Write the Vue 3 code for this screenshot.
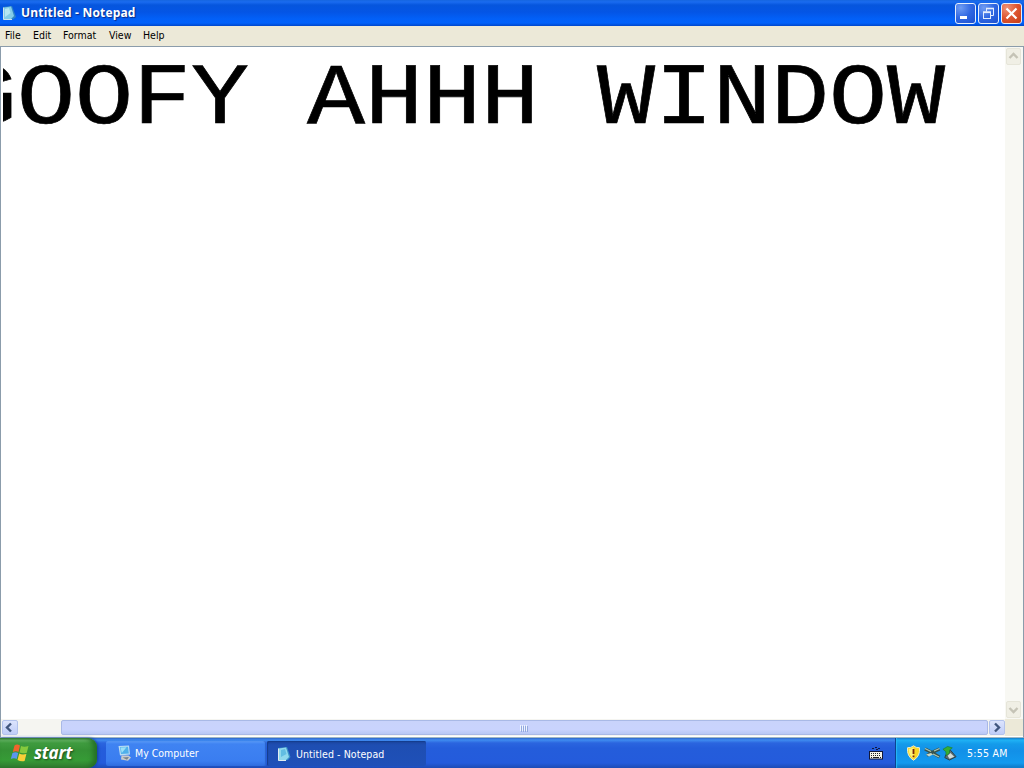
<template>
  <div class="screen">
    <header class="titlebar">
      <svg class="title-icon" viewBox="0 0 16 16">
        <path d="M2 2 L11 1 L15 12 L12 14.5 L2 15 Z" fill="#2f84c6" />
        <path d="M3 2.5 L10 1.5 L13 11 L10 14 L3 14 Z" fill="#84cde8" />
        <path d="M4 4 L8 3 L9.5 8 L4 12 Z" fill="#b5e6f2" />
        <path d="M2.5 2.5 V14.5 H11" fill="none" stroke="#cfe3ec" />
      </svg>
      <h1 class="title">Untitled - Notepad</h1>
      <div class="controls">
        <button class="ctl" aria-label="Minimize">
          <svg viewBox="0 0 21 21"><rect x="5" y="13" width="7" height="3" fill="#fff" /></svg>
        </button>
        <button class="ctl" aria-label="Restore">
          <svg viewBox="0 0 21 21" fill="none" stroke="#e4edfd">
            <path d="M8.5 8.5 V5.5 H15.5 V12.5 H13" />
            <path d="M8 5.5 H16" stroke-width="1.6" />
            <rect x="5.5" y="9" width="7" height="6.5" />
            <path d="M5 9.3 H13" stroke-width="1.6" />
          </svg>
        </button>
        <button class="ctl close" aria-label="Close">
          <svg viewBox="0 0 21 21"><path d="M5.5 5.5 L15.5 15.5 M15.5 5.5 L5.5 15.5" stroke="#fff" stroke-width="2.2" /></svg>
        </button>
      </div>
    </header>

    <nav class="menubar">
      <span v-for="m in menus" :key="m.label" :style="{ width: m.width + 'px' }">{{ m.label }}</span>
    </nav>

    <main class="client">
      <div class="upper">
        <div class="editor"><div class="text">GOOFY AHHH WINDOW</div></div>
        <div class="vscroll">
          <div class="vbtn"><svg viewBox="0 0 15 17"><path d="M3.5 10 L7.5 6 L11.5 10" /></svg></div>
          <div class="vbtn"><svg viewBox="0 0 15 17"><path d="M3.5 7 L7.5 11 L11.5 7" /></svg></div>
        </div>
      </div>
      <div class="lower">
        <div class="hscroll">
          <div class="hbtn"><svg viewBox="0 0 15 15"><path d="M9 3.5 L5 7.5 L9 11.5" /></svg></div>
          <div class="track"></div>
          <div class="thumb"><i v-for="n in 4" :key="n"></i></div>
          <div class="hbtn"><svg viewBox="0 0 15 15"><path d="M6 3.5 L10 7.5 L6 11.5" /></svg></div>
        </div>
        <div class="corner"></div>
      </div>
    </main>

    <footer class="taskbar">
      <button class="start">
        <svg class="flag" viewBox="0 0 20 20">
          <path d="M4.5 2.5 Q7 0.5 10 2.5 L8.5 9 Q6 7.5 2.8 9 Z" fill="#f0642c" />
          <path d="M11 3 Q14 4.5 18.5 3 L16.8 9.8 Q13 11 9.5 9.5 Z" fill="#85c93d" />
          <path d="M2.5 10 Q5.5 8.5 8.2 10 L6.7 16 Q4 14.5 0.8 16 Z" fill="#5b96ee" />
          <path d="M9.2 10.5 Q12 12 16.4 11 L14.6 18 Q11 19 7.5 17 Z" fill="#f9cf38" />
        </svg>
        <span>start</span>
      </button>
      <div class="tasks">
        <button class="task">
          <svg viewBox="0 0 16 16">
            <path d="M1.5 1 L12 0.5 L13 9.5 L3 10.5 Z" fill="#b9dcf3" />
            <path d="M3 2 L11 1.8 L11.8 8.4 L4 9 Z" fill="#4fb0ea" />
            <path d="M3.5 2.5 L9.5 2.3 L4.8 8 Z" fill="#9be0f7" />
            <path d="M4.5 10.5 H11.5 L14 12.5 L11 15.8 L4 14.5 Z" fill="#c9cccb" />
            <path d="M5.5 12.5 L12 12 L10 14.8 Z" fill="#77828e" />
          </svg>
          <span class="computer">My Computer</span>
        </button>
        <button class="task active">
          <svg viewBox="0 0 16 16">
            <path d="M2 2 L11 1 L14.5 11 L12 14 L2 15 Z" fill="#3a91c8" />
            <path d="M3 2.5 L10 1.5 L13 11 L10 14 L3 14 Z" fill="#90d8ed" />
            <path d="M5 4 L9 3 L10.5 8 L5 11 Z" fill="#62bde2" />
            <path d="M2.5 2.5 V14.5 H10" fill="none" stroke="#e2edf0" />
          </svg>
          <span class="notepad">Untitled - Notepad</span>
        </button>
      </div>
      <svg class="keyboard" viewBox="0 0 14 14">
        <path d="M3 2.5 H5 M6 1.5 H8 M9 2.5 H11 M7 3.5 H9" stroke="#101a40" />
        <rect x="0.5" y="5.5" width="13" height="7.5" fill="#f5f4ea" stroke="#11183a" />
        <path d="M2 7.5 H12 M2 9.5 H12" stroke="#222" stroke-dasharray="1 1" />
        <path d="M2 11.5 H3 M4 11.5 H10 M11 11.5 H12" stroke="#222" />
      </svg>
      <div class="tray">
        <svg class="shield" viewBox="0 0 14 16">
          <path d="M7 0.8 Q9.5 3 13 2.7 Q14 11 7 15.3 Q0 11 1 2.7 Q4.5 3 7 0.8 Z" fill="#f8d727" stroke="#e9e9cb" />
          <path d="M7 2.2 Q4.5 4 2.2 4 Q2 10 7 13.8 Z" fill="#fdf27c" />
          <path d="M7 4 V9 M7 10.5 V12.3" stroke="#7b2606" stroke-width="1.8" />
        </svg>
        <svg class="net" viewBox="0 0 17 14">
          <path d="M1 3 L8 6.5 L15.5 3 M3 9.5 L8 6.5 L15.5 11" fill="none" stroke="#38534e" stroke-width="3.2" />
          <path d="M1 2.5 L7 5.5 M10 5 L15.5 2.5 M9 8 L15 11" stroke="#a9c7b5" stroke-width="1.3" />
          <path d="M2 8.5 L7 7 L9 8.5 L5 10.5 Z" fill="#c5d7c7" />
        </svg>
        <svg class="eject" viewBox="0 0 16 16">
          <path d="M4 10 L9 5 L15 12 L8 15.5 L3 13 Z" fill="#5d6d71" stroke="#263f4c" />
          <path d="M6 11 L9 8 L13 12 L8 14 Z" fill="#d3dcda" />
          <path d="M1 4 L6 1 L11 2.5 L8 5 L8 8 L4.5 11 L4 6.5 Z" fill="#35ae35" stroke="#167a27" stroke-width="0.6" />
        </svg>
        <time>5:55 AM</time>
      </div>
    </footer>
  </div>
</template>

<script setup>
const menus = [
  { label: 'File', width: 28 },
  { label: 'Edit', width: 30 },
  { label: 'Format', width: 46 },
  { label: 'View', width: 34 },
  { label: 'Help', width: 30 },
];
</script>

<style>
body {
  margin: 0;
  overflow: hidden;
}
</style>

<style scoped>
.screen {
  width: 1024px;
  height: 768px;
  display: flex;
  flex-direction: column;
  overflow: hidden;
  background: #fff;
  font-family: "DejaVu Sans Condensed", "DejaVu Sans", sans-serif;
  font-stretch: condensed;
  font-size: 10.5px;
}

button {
  border: 0;
  margin: 0;
  padding: 0;
  font: inherit;
  color: inherit;
}

svg {
  display: block;
  flex: none;
}

.titlebar {
  height: 26px;
  flex: none;
  box-sizing: border-box;
  display: flex;
  align-items: center;
  padding: 0 2px 0 1px;
  background: linear-gradient(#1666e0 0, #1a6bf0 2px, #0656dd 5px, #0455e5 12px, #0260f8 19px, #0162fb 23px, #0047cb 26px);
}

.title-icon {
  width: 16px;
  height: 16px;
}

.title {
  margin: 0 0 0 4px;
  flex: 1;
  color: #fff;
  font-family: "Open Sans", sans-serif;
  font-stretch: normal;
  font-size: 12px;
  font-weight: 700;
  letter-spacing: 0.18px;
  line-height: 26px;
  white-space: nowrap;
  text-shadow: 1px 1px 1px #0a2a86;
}

.controls {
  display: flex;
  gap: 2px;
}

.ctl {
  width: 21px;
  height: 21px;
  box-sizing: border-box;
  border: 1px solid #e6effc;
  border-radius: 3px;
  background: radial-gradient(circle at 25% 20%, #6f9cf3, #3067e2 50%, #1c50cf);
}

.ctl svg {
  width: 21px;
  height: 21px;
  margin: -1px;
}

.ctl.close {
  background: radial-gradient(circle at 25% 20%, #ee9276, #dd5530 50%, #c63d14);
}

.menubar {
  height: 20px;
  flex: none;
  display: flex;
  padding-left: 5px;
  background: #ece9d8;
  line-height: 19px;
  color: #000;
  white-space: nowrap;
}

.client {
  flex: 1;
  min-height: 0;
  box-sizing: border-box;
  display: flex;
  flex-direction: column;
  border: 1px solid #8b9cab;
  border-bottom-color: #9fb8c4;
  background: #fff;
}

.upper {
  flex: 1;
  min-height: 0;
  display: flex;
}

.editor {
  flex: 1;
  min-width: 0;
  margin-left: 2px;
  overflow: hidden;
}

/* scrolled right, so the first letter is cut by the editor's edge */
.text {
  width: max-content;
  margin-left: -44px;
  padding-top: 1px;
  font-family: "Liberation Mono", monospace;
  font-size: 88px;
  letter-spacing: -0.08px;
  line-height: 103px;
  white-space: nowrap;
  color: #000;
  -webkit-text-stroke: 0.7px #000;
  transform: scaleX(1.1);
  transform-origin: 0 0;
}

.vscroll {
  width: 18px;
  box-sizing: border-box;
  padding: 1px 2px 1px 1px;
  display: flex;
  flex-direction: column;
  justify-content: space-between;
  background: #f8f8f3;
}

.vbtn {
  height: 17px;
  box-sizing: border-box;
  border: 1px solid #e6e5d9;
  border-radius: 2px;
  background: #f0efe5;
}

.vbtn svg {
  width: 15px;
  height: 17px;
  margin: -1px;
  fill: none;
  stroke: #c5c3b6;
  stroke-width: 2.4;
}

.lower {
  height: 17px;
  flex: none;
  display: flex;
  padding-bottom: 1px;
}

.hscroll {
  flex: 1;
  display: flex;
  align-items: center;
  padding: 0 0 0 1px;
  background: #f5f5f1;
}

.hbtn {
  width: 16px;
  height: 15px;
  box-sizing: border-box;
  border: 1px solid #b2c2ec;
  border-radius: 2px;
  background: linear-gradient(#dce4fd, #bfcdf8);
}

.hbtn svg {
  width: 15px;
  height: 15px;
  margin: -1px;
  fill: none;
  stroke: #40567f;
  stroke-width: 2.4;
}

.track {
  width: 43px;
}

.thumb {
  flex: 1;
  height: 15px;
  box-sizing: border-box;
  display: flex;
  align-items: center;
  justify-content: center;
  gap: 1px;
  padding-right: 2px;
  border: 1px solid #a9b9e6;
  border-radius: 2px;
  background: linear-gradient(#c9d3fb, #c9d3fd 65%, #b8c8f5);
  margin-right: 1px;
}

.thumb i {
  width: 1px;
  height: 6px;
  background: #eef4fe;
  box-shadow: 1px 1px 0 #94a9df;
}

.corner {
  width: 18px;
  background: #ece9d8;
}

.taskbar {
  height: 30px;
  flex: none;
  display: flex;
  background: linear-gradient(#2f65c9 0, #3f8cf0 2px, #2b65df 5px, #245ddb 10px, #245bdc 25px, #1d4bb5 30px);
  color: #fff;
}

.start {
  width: 97px;
  display: flex;
  align-items: center;
  border-radius: 0 9px 9px 0;
  background: linear-gradient(#347a32 0, #65b665 2px, #409c40 5px, #359135 12px, #369b36 22px, #327c31 30px);
  box-shadow: inset -4px 0 5px #257026, 1px 0 3px #153d99;
}

.flag {
  width: 20px;
  height: 20px;
  margin-left: 10px;
}

.start span {
  margin-left: 4px;
  font-family: "Open Sans", sans-serif;
  font-stretch: normal;
  font-size: 17px;
  font-style: italic;
  font-weight: 700;
  line-height: 24px;
  padding-bottom: 1px;
  letter-spacing: -0.2px;
  text-shadow: 1px 1px 2px #1c4a1c;
}

.tasks {
  flex: 1;
  display: flex;
  gap: 1px;
  padding: 3px 0 2px 9px;
}

.task {
  width: 160px;
  box-sizing: border-box;
  display: flex;
  align-items: center;
  padding: 0 0 2px 11px;
  border-radius: 2px;
  background: linear-gradient(#5a9bf8 0, #3f83f2 3px, #3a7df0 20px, #2f6ce0 25px);
  box-shadow: inset -1px 0 1px #2a63cd;
}

.task svg {
  width: 16px;
  height: 16px;
}

.task span {
  margin-left: 2px;
  white-space: nowrap;
}

.task.active {
  width: 159px;
  padding: 0 0 0 9px;
  background: linear-gradient(#1a449d 0, #1e4eb2 4px, #1f50b8 24px);
  box-shadow: inset 1px 1px 1px #143c8c;
}

.task.active span {
  margin-left: 4px;
  letter-spacing: 0.08px;
}

.keyboard {
  width: 14px;
  height: 14px;
  margin: 8px 12px 0 0;
}

.tray {
  width: 129px;
  box-sizing: border-box;
  display: flex;
  align-items: center;
  padding-left: 10px;
  border-left: 1px solid #0b4491;
  background: linear-gradient(#1274c4 0, #1fb2f5 2px, #149bea 6px, #1290e8 13px, #139aef 25px, #0f75c2 30px);
  box-shadow: inset 1px 0 1px #27b9f7;
}

.shield {
  width: 15px;
  height: 16px;
}

.net {
  width: 17px;
  height: 14px;
  margin-left: 3px;
}

.eject {
  width: 15px;
  height: 16px;
  margin-left: 1px;
}

time {
  margin-left: 10px;
  white-space: nowrap;
  letter-spacing: 0.25px;
}
</style>
